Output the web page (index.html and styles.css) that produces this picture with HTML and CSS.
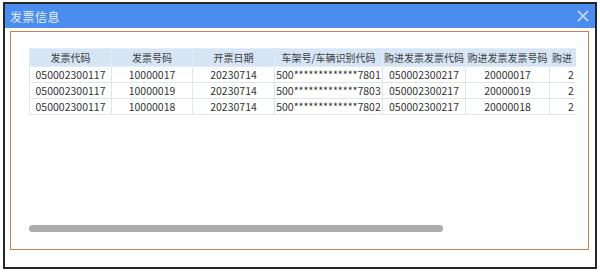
FILE: index.html
```html
<!DOCTYPE html>
<html>
<head>
<meta charset="utf-8">
<link rel="stylesheet" href="styles.css">
</head>
<body>
<div class="window">
  <div class="titlebar">
    <span class="title">发票信息</span>
    <svg class="close" width="12" height="12" viewBox="0 0 12 12"><path d="M1 1 L11 11 M11 1 L1 11" stroke="#cfe0fb" stroke-width="1.6" fill="none"/></svg>
  </div>
  <div class="content">
    <div class="panel">
      <div class="grid-wrap">
        <table class="grid">
          <colgroup>
            <col style="width:82px"><col style="width:81px"><col style="width:82px"><col style="width:108px"><col style="width:83px"><col style="width:84px"><col style="width:60px">
          </colgroup>
          <thead>
            <tr><th>发票代码</th><th>发票号码</th><th>开票日期</th><th>车架号/车辆识别代码</th><th>购进发票发票代码</th><th>购进发票发票号码</th><th class="left">购进</th></tr>
          </thead>
          <tbody>
            <tr><td>050002300117</td><td>10000017</td><td>20230714</td><td>500*************7801</td><td>050002300217</td><td>20000017</td><td class="left pad">2</td></tr>
            <tr><td>050002300117</td><td>10000019</td><td>20230714</td><td>500*************7803</td><td>050002300217</td><td>20000019</td><td class="left pad">2</td></tr>
            <tr><td>050002300117</td><td>10000018</td><td>20230714</td><td>500*************7802</td><td>050002300217</td><td>20000018</td><td class="left pad">2</td></tr>
          </tbody>
        </table>
      </div>
      <div class="spacer"></div>
      <div class="scrollbar"><div class="thumb"></div></div>
    </div>
  </div>
</div>
</body>
</html>
```
FILE: styles.css
```css
html, body {
  margin: 0;
  padding: 0;
  background: #ffffff;
}
body {
  padding: 2px 0 0 3px;
  font-family: "Noto Sans CJK SC", "Noto Sans", sans-serif;
}
.window {
  width: 590px;
  height: 263px;
  border: 2px solid #262626;
  display: flex;
  flex-direction: column;
  background: #fff;
}
.titlebar {
  height: 24px;
  background: #4b8cef;
  display: flex;
  align-items: center;
  justify-content: space-between;
  padding: 0 6px 0 5px;
  flex: none;
}
.title {
  color: #e4eefc;
  font-size: 12px;
  letter-spacing: 0.5px;
}
.close { display: block; }
.content {
  flex: 1;
  padding: 3px 6px 17px 5px;
  display: flex;
}
.panel {
  flex: 1;
  border: 1.5px solid #c7834f;
  padding: 16px 0 0 18px;
  display: flex;
  flex-direction: column;
}
.grid-wrap {
  width: 547px;
  overflow: hidden;
}
.grid {
  border-collapse: collapse;
  table-layout: fixed;
  width: 580px;
  font-size: 10.5px;
  color: #333;
}
.grid th, .grid td {
  height: 15px;
  padding: 0;
  text-align: center;
  white-space: nowrap;
  overflow: hidden;
  border: 1px solid #dbe6f1;
  line-height: 15px;
}
.grid th {
  background: #d5e5f6;
  font-weight: normal;
  font-size: 10px;
  color: #3a3a3a;
  height: 17px;
  border-color: #e3edf7;
}
.grid th.left { padding-left: 2px; }
.grid .left { text-align: left; }
.grid td.pad { padding-left: 18px; }
.spacer { flex: 1; }
.scrollbar {
  height: 7px;
  margin-bottom: 17px;
  width: 547px;
}
.thumb {
  width: 414px;
  height: 7px;
  background: #ababab;
  border-radius: 4px;
}
```
